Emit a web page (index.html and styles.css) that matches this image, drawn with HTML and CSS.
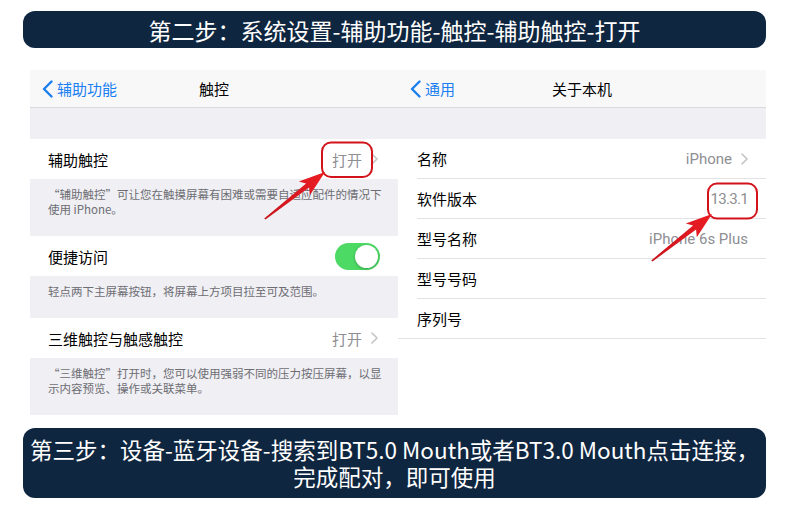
FILE: index.html
```html
<!DOCTYPE html>
<html lang="zh-CN">
<head>
<meta charset="utf-8">
<title>辅助触控设置</title>
<link rel="stylesheet" href="styles.css">
</head>
<body>
<div class="page">
  <div class="banner banner-top">第二步：系统设置-辅助功能-触控-辅助触控-打开</div>

  <div class="panels">
    <section class="panel panel-left">
      <div class="nav">
        <div class="back">
          <svg class="back-icon" width="11" height="18" viewBox="0 0 11 18"><path d="M9.5 1.5 L2 9 L9.5 16.5" fill="none" stroke="#1a7ff0" stroke-width="2.4" stroke-linecap="round" stroke-linejoin="round"/></svg>
          <span>辅助功能</span>
        </div>
        <div class="title">触控</div>
        <div></div>
      </div>
      <div class="gap"></div>
      <div class="row">
        <span class="label">辅助触控</span>
        <span class="value">打开<svg class="chev" width="7" height="12" viewBox="0 0 7 12"><path d="M1 1 L6 6 L1 11" fill="none" stroke="#c4c4c8" stroke-width="1.6" stroke-linecap="round" stroke-linejoin="round"/></svg></span>
      </div>
      <div class="foot">“辅助触控”可让您在触摸屏幕有困难或需要自适应配件的情况下<br>使用 iPhone。</div>
      <div class="row">
        <span class="label">便捷访问</span>
        <span class="toggle"></span>
      </div>
      <div class="foot">轻点两下主屏幕按钮，将屏幕上方项目拉至可及范围。</div>
      <div class="row">
        <span class="label">三维触控与触感触控</span>
        <span class="value">打开<svg class="chev" width="7" height="12" viewBox="0 0 7 12"><path d="M1 1 L6 6 L1 11" fill="none" stroke="#c4c4c8" stroke-width="1.6" stroke-linecap="round" stroke-linejoin="round"/></svg></span>
      </div>
      <div class="foot">“三维触控”打开时，您可以使用强弱不同的压力按压屏幕，以显<br>示内容预览、操作或关联菜单。</div>
    </section>

    <section class="panel panel-right">
      <div class="nav">
        <div class="back">
          <svg class="back-icon" width="11" height="18" viewBox="0 0 11 18"><path d="M9.5 1.5 L2 9 L9.5 16.5" fill="none" stroke="#1a7ff0" stroke-width="2.4" stroke-linecap="round" stroke-linejoin="round"/></svg>
          <span>通用</span>
        </div>
        <div class="title">关于本机</div>
        <div></div>
      </div>
      <div class="gap"></div>
      <div class="list">
        <div class="irow">
          <span class="label">名称</span>
          <span class="value">iPhone<svg class="chev" width="7" height="12" viewBox="0 0 7 12"><path d="M1 1 L6 6 L1 11" fill="none" stroke="#c4c4c8" stroke-width="1.6" stroke-linecap="round" stroke-linejoin="round"/></svg></span>
        </div>
        <div class="irow">
          <span class="label">软件版本</span>
          <span class="value value-tight">13.3.1</span>
        </div>
        <div class="irow">
          <span class="label">型号名称</span>
          <span class="value">iPhone 6s Plus</span>
        </div>
        <div class="irow">
          <span class="label">型号号码</span>
        </div>
        <div class="irow">
          <span class="label">序列号</span>
        </div>
      </div>
    </section>
  </div>

  <div class="banner banner-bottom">
    <div class="bline">第三步：设备-蓝牙设备-搜索到BT5.0 Mouth或者BT3.0 Mouth点击连接，</div>
    <div class="bline">完成配对，即可使用</div>
  </div>

  <svg class="annot" width="790" height="522" viewBox="0 0 790 522">
    <defs>
      <linearGradient id="ag" x1="265" y1="219" x2="325" y2="172" gradientUnits="userSpaceOnUse">
        <stop offset="0" stop-color="#c8141b"/>
        <stop offset="1" stop-color="#ec1d24"/>
      </linearGradient>
    </defs>
    <rect x="322" y="142.5" width="50" height="34.5" rx="9" fill="none" stroke="#d3131b" stroke-width="2"/>
    <rect x="708" y="183.5" width="49" height="35" rx="9" fill="none" stroke="#d3131b" stroke-width="2"/>
    <polygon points="265.5,219.5 309.1,187.6 309.8,195.2 325,172 298.8,181.4 306.1,183.6 264.2,218.4" fill="url(#ag)"/>
    <g transform="translate(387,42)">
      <polygon points="265.5,219.5 309.1,187.6 309.8,195.2 325,172 298.8,181.4 306.1,183.6 264.2,218.4" fill="url(#ag)"/>
    </g>
  </svg>
</div>
</body>
</html>
```

FILE: styles.css
```css
* { box-sizing: border-box; }

body {
  margin: 0;
  background: #ffffff;
  font-family: Roboto, "Noto Sans CJK SC", sans-serif;
}

.page {
  position: relative;
  width: 790px;
  height: 522px;
  overflow: hidden;
}

.banner {
  background: #0f2640;
  color: #ffffff;
  font-family: "Noto Sans CJK SC", sans-serif;
  border-radius: 12px;
  display: flex;
  align-items: center;
  justify-content: center;
  text-align: center;
}

.banner-top {
  margin: 11px 24px 0 23px;
  height: 37px;
  font-size: 23px;
}

.banner-bottom {
  margin: 13px 24px 0 23px;
  height: 70px;
  flex-direction: column;
  font-size: 22.5px;
}

.bline {
  line-height: 27px;
  height: 27px;
}

.panels {
  display: flex;
  margin-top: 22px;
  padding-left: 30px;
  height: 345px;
}

.panel {
  width: 368px;
}

.nav {
  height: 38px;
  background: #f8f8f9;
  border-bottom: 1px solid #d9d9dd;
  display: grid;
  grid-template-columns: 1fr auto 1fr;
  align-items: center;
}

.back {
  display: flex;
  align-items: center;
  gap: 4px;
  padding-left: 12px;
  color: #1a7ff0;
  font-size: 15px;
}

.back-icon {
  display: block;
}

.title {
  font-size: 15px;
  color: #000000;
  font-weight: 400;
}

.gap {
  height: 31px;
  background: #efeff4;
}

.row {
  height: 40px;
  background: #ffffff;
  display: flex;
  align-items: center;
  justify-content: space-between;
  padding: 0 18px 0 18px;
}

.label {
  font-size: 15px;
  color: #000000;
}

.value {
  font-size: 15px;
  color: #8e8e93;
  display: flex;
  align-items: center;
}

.value-tight {
  letter-spacing: -0.7px;
}

.chev {
  display: block;
  margin-left: 9px;
}

.panel-left .row .value {
  padding-right: 2px;
}

.foot {
  background: #efeff4;
  color: #6d6d72;
  font-size: 11.5px;
  line-height: 15px;
  padding: 8px 14px 19px 18px;
  font-family: "Noto Sans CJK SC", sans-serif;
}

.toggle {
  width: 45px;
  height: 27px;
  border-radius: 14px;
  background: #4cd964;
  position: relative;
}

.toggle::after {
  content: "";
  position: absolute;
  right: 2px;
  top: 2px;
  width: 23px;
  height: 23px;
  border-radius: 50%;
  background: #ffffff;
  box-shadow: 0 1px 3px rgba(0, 0, 0, 0.25);
}

.list {
  padding-left: 19px;
  background: #ffffff;
}

.irow {
  height: 40px;
  display: flex;
  align-items: center;
  justify-content: space-between;
  padding-right: 18px;
  border-bottom: 1px solid #e2e2e6;
}

.irow:last-child {
  margin-left: -19px;
  padding-left: 19px;
}

.annot {
  position: absolute;
  left: 0;
  top: 0;
  pointer-events: none;
}
```
